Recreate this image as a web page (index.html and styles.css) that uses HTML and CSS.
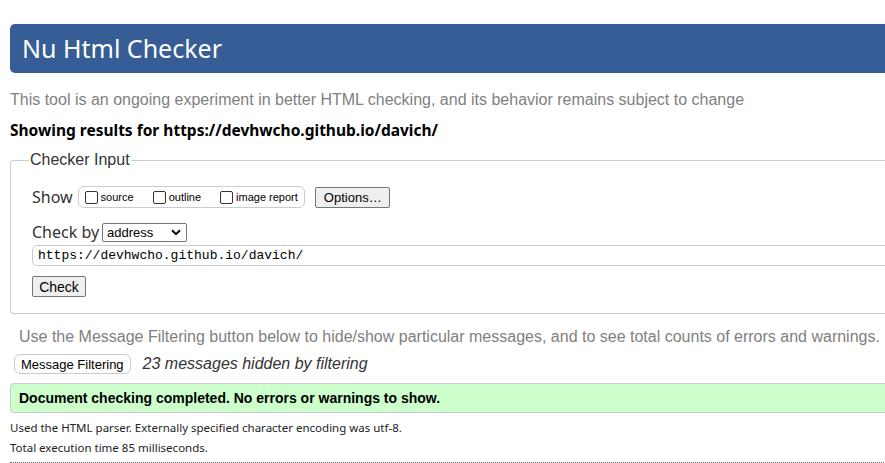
FILE: index.html
```html
<!DOCTYPE html>
<html>
<head>
<meta charset="utf-8">
<title>Nu Html Checker</title>
<link rel="stylesheet" href="styles.css">
</head>
<body>
<div class="page">
  <h1 class="title">Nu Html Checker</h1>
  <p class="intro">This tool is an ongoing experiment in better HTML checking, and its behavior remains subject to change</p>
  <p class="showing">Showing results for https://devhwcho.github.io/davich/</p>
  <fieldset class="input-box">
    <legend class="legend">Checker Input</legend>
    <div class="row show-row">
      <span class="row-label">Show</span>
      <span class="opts">
        <label class="opt"><span class="cb"></span>source</label>
        <label class="opt"><span class="cb"></span>outline</label>
        <label class="opt"><span class="cb"></span>image report</label>
      </span>
      <button class="btn options">Options…</button>
    </div>
    <div class="row checkby-row">
      <span class="row-label">Check by</span>
      <span class="select">address<svg class="chev" width="10" height="7" viewBox="0 0 10 7"><path d="M1 1.2 L5 5.2 L9 1.2" fill="none" stroke="#000" stroke-width="2"/></svg></span>
    </div>
    <div class="url">https://devhwcho.github.io/davich/</div>
    <button class="btn check">Check</button>
  </fieldset>
  <p class="filter-note">Use the Message Filtering button below to hide/show particular messages, and to see total counts of errors and warnings.</p>
  <div class="filter-row">
    <button class="btn filter">Message Filtering</button>
    <em class="hidden-count">23 messages hidden by filtering</em>
  </div>
  <div class="success">Document checking completed. No errors or warnings to show.</div>
  <div class="meta-block">
    <p class="meta">Used the HTML parser. Externally specified character encoding was utf-8.</p>
    <p class="meta">Total execution time 85 milliseconds.</p>
  </div>
  <div class="dotted"></div>
</div>
</body>
</html>
```
FILE: styles.css
```css
html, body {
  margin: 0;
  padding: 0;
  overflow: hidden;
  background: #fff;
}
.page {
  width: 1000px;
  padding: 24px 0 0 10px;
  font-family: "Liberation Sans", Arial, sans-serif;
  color: #000;
}
.title {
  margin: 0;
  height: 49px;
  box-sizing: border-box;
  background: #365d95;
  border-radius: 5px 0 0 5px;
  color: #fff;
  font-family: "Noto Sans", sans-serif;
  font-weight: normal;
  font-size: 25px;
  line-height: 49px;
  padding-left: 12px;
}
.intro {
  margin: 17px 0 0 0;
  color: #808080;
  font-size: 16px;
  line-height: 20px;
}
.showing {
  margin: 10px 0 0 0;
  font-family: "Noto Sans", sans-serif;
  font-weight: bold;
  font-size: 15.5px;
  line-height: 20px;
}
.input-box {
  margin: 11px 0 0 0;
  border: 1px solid #ccc;
  border-right: none;
  border-radius: 4px 0 0 4px;
  padding: 17px 0 16px 21px;
  min-width: 0;
}
.legend {
  font-size: 16px;
  color: #333;
  padding: 0 1px;
  margin-left: -3px;
}
.row {
  display: flex;
  align-items: center;
}
.row-label {
  font-family: "Noto Sans", sans-serif;
  font-size: 16px;
  color: #333;
}
.show-row {
  height: 22px;
}
.opts {
  display: flex;
  align-items: center;
  margin-left: 5px;
  height: 20px;
  border: 1px solid #ccc;
  border-radius: 6px;
  padding: 0 6px 0 6px;
  font-size: 11px;
}
.opt {
  display: flex;
  align-items: center;
  margin-right: 19px;
}
.opt:last-child {
  margin-right: 0;
}
.cb {
  width: 11px;
  height: 11px;
  border: 1px solid #333;
  border-radius: 2px;
  margin-right: 3px;
}
.btn {
  font-family: "Liberation Sans", Arial, sans-serif;
  font-size: 13px;
  color: #000;
  background: #efefef;
  border: 1px solid #767676;
  border-radius: 2px;
  padding: 0 8px;
  height: 21px;
}
.options {
  margin-left: 10px;
  width: 75px;
}
.checkby-row {
  margin-top: 14px;
  height: 20px;
}
.select {
  display: flex;
  align-items: center;
  justify-content: space-between;
  margin-left: 3px;
  width: 85px;
  height: 19px;
  box-sizing: border-box;
  border: 1px solid #767676;
  border-radius: 2px;
  padding: 0 5px 0 4px;
  font-size: 13px;
}
.url {
  margin-top: 3px;
  height: 21px;
  box-sizing: border-box;
  border: 1px solid #ccc;
  border-right: none;
  border-radius: 5px 0 0 5px;
  padding-left: 5px;
  font-family: "Liberation Mono", monospace;
  font-size: 13px;
  line-height: 19px;
}
.check {
  margin-top: 10px;
  width: 54px;
  padding: 0;
  font-size: 14px;
}
.filter-note {
  margin: 13px 0 0 9px;
  color: #808080;
  font-size: 16px;
  line-height: 20px;
}
.filter-row {
  display: flex;
  align-items: center;
  margin-top: 7px;
  margin-left: 4px;
}
.filter {
  height: 20px;
  border: 1px solid #ccc;
  border-radius: 6px;
  background: #fff;
  padding: 0 6px;
}
.hidden-count {
  margin-left: 12px;
  font-size: 16px;
  color: #333;
}
.success {
  margin-top: 9px;
  height: 30px;
  box-sizing: border-box;
  background: #ccffcc;
  border: 1px solid #ccc;
  border-right: none;
  border-radius: 4px 0 0 4px;
  padding-left: 8px;
  font-weight: bold;
  font-size: 14px;
  line-height: 28px;
}
.meta-block {
  margin-top: 5px;
}
.meta {
  margin: 0;
  font-family: "Noto Sans", sans-serif;
  font-size: 11.5px;
  line-height: 20px;
  color: #222;
}
.dotted {
  margin-top: 4px;
  border-top: 1px dotted #666;
}
```
